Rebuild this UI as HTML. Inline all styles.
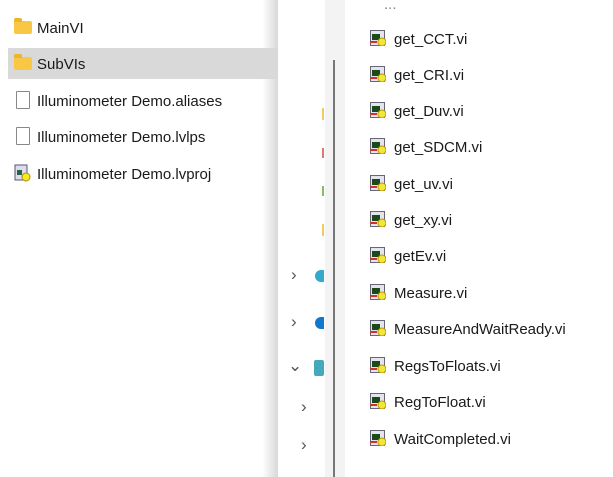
<!DOCTYPE html>
<html><head><style>
body{margin:0;width:613px;height:477px;background:#fff;position:relative;overflow:hidden;font-family:"Liberation Sans",sans-serif;font-size:15px;color:#1a1a1a}
.a{position:absolute}
.l{position:absolute;left:37px;line-height:18px;margin-top:2px}
.r{position:absolute;left:394px;line-height:18px;margin-top:2px}
.fold{position:absolute;left:14px;width:18px;height:13px;background:#f8c845;border-radius:2px}
.fold:before{content:"";position:absolute;left:0;top:-3px;width:8px;height:4px;background:#eeb52c;border-radius:2px 2px 0 0}
.doc{position:absolute;left:16px;width:12px;height:16px;border:1px solid #888;border-radius:1px;background:#fff}
.vi{position:absolute;left:370px;width:16px;height:16px}
.ch{position:absolute;color:#555;font-size:17px}
</style></head><body>
<div class="a" style="left:262px;top:0;width:16px;height:477px;background:linear-gradient(90deg,#fff,#d8d8d8)"></div>
<div class="a" style="left:8px;top:48px;width:269px;height:31px;background:#d9d9d9"></div>
<div class="a" style="left:325px;top:0;width:20px;height:477px;background:#f3f3f3"></div>
<div class="a" style="left:333px;top:60px;width:2px;height:417px;background:#777"></div>
<div class="fold" style="top:21px"></div><div class="l" style="top:18px">MainVI</div>
<div class="fold" style="top:57px"></div><div class="l" style="top:54px">SubVIs</div>
<div class="doc" style="top:91px"></div><div class="l" style="top:91px">Illuminometer Demo.aliases</div>
<div class="doc" style="top:127px"></div><div class="l" style="top:127px">Illuminometer Demo.lvlps</div>
<svg class="a" style="left:14px;top:164px" width="18" height="18"><rect x="1" y="1" width="12" height="15" fill="#dde" stroke="#557"/><rect x="3" y="6" width="5" height="5" fill="#264"/><circle cx="12" cy="13" r="4" fill="#ee2" stroke="#b80"/></svg>
<div class="l" style="top:164px">Illuminometer Demo.lvproj</div>
<div class="a" style="left:322px;top:108px;width:2px;height:12px;background:#f5c860"></div>
<div class="a" style="left:322px;top:148px;width:2px;height:10px;background:#d77"></div>
<div class="a" style="left:322px;top:186px;width:2px;height:10px;background:#8b6"></div>
<div class="a" style="left:322px;top:224px;width:2px;height:12px;background:#f5c860"></div>
<div class="ch" style="left:291px;top:265px">›</div>
<div class="ch" style="left:291px;top:312px">›</div>
<div class="ch" style="left:288px;top:356px">⌄</div>
<div class="ch" style="left:301px;top:397px">›</div>
<div class="ch" style="left:301px;top:435px">›</div>
<div class="a" style="left:315px;top:270px;width:9px;height:12px;background:#3ac;border-radius:6px 0 0 6px"></div>
<div class="a" style="left:315px;top:317px;width:9px;height:12px;background:#17c;border-radius:6px 0 0 6px"></div>
<div class="a" style="left:314px;top:360px;width:10px;height:16px;background:#4ab;border-radius:2px"></div>
<div class="a" style="left:384px;top:-4px;color:#888">...</div>
<svg width="0" height="0" style="position:absolute"><defs><g id="v"><rect x="0.5" y="0.5" width="14" height="15" fill="#e4e4ee" stroke="#667"/><rect x="2" y="4" width="8" height="6" fill="#1a4a1a"/><circle cx="12" cy="12" r="4" fill="#f2e63a" stroke="#b90"/><rect x="0" y="11" width="7" height="2" fill="#c33"/></g></defs></svg>
<svg class="vi" style="top:30px"><use href="#v"/></svg><div class="r" style="top:29px">get_CCT.vi</div>
<svg class="vi" style="top:66px"><use href="#v"/></svg><div class="r" style="top:65px">get_CRI.vi</div>
<svg class="vi" style="top:102px"><use href="#v"/></svg><div class="r" style="top:101px">get_Duv.vi</div>
<svg class="vi" style="top:138px"><use href="#v"/></svg><div class="r" style="top:137px">get_SDCM.vi</div>
<svg class="vi" style="top:175px"><use href="#v"/></svg><div class="r" style="top:174px">get_uv.vi</div>
<svg class="vi" style="top:211px"><use href="#v"/></svg><div class="r" style="top:210px">get_xy.vi</div>
<svg class="vi" style="top:247px"><use href="#v"/></svg><div class="r" style="top:246px">getEv.vi</div>
<svg class="vi" style="top:284px"><use href="#v"/></svg><div class="r" style="top:283px">Measure.vi</div>
<svg class="vi" style="top:320px"><use href="#v"/></svg><div class="r" style="top:319px">MeasureAndWaitReady.vi</div>
<svg class="vi" style="top:357px"><use href="#v"/></svg><div class="r" style="top:356px">RegsToFloats.vi</div>
<svg class="vi" style="top:393px"><use href="#v"/></svg><div class="r" style="top:392px">RegToFloat.vi</div>
<svg class="vi" style="top:430px"><use href="#v"/></svg><div class="r" style="top:429px">WaitCompleted.vi</div>
</body></html>
